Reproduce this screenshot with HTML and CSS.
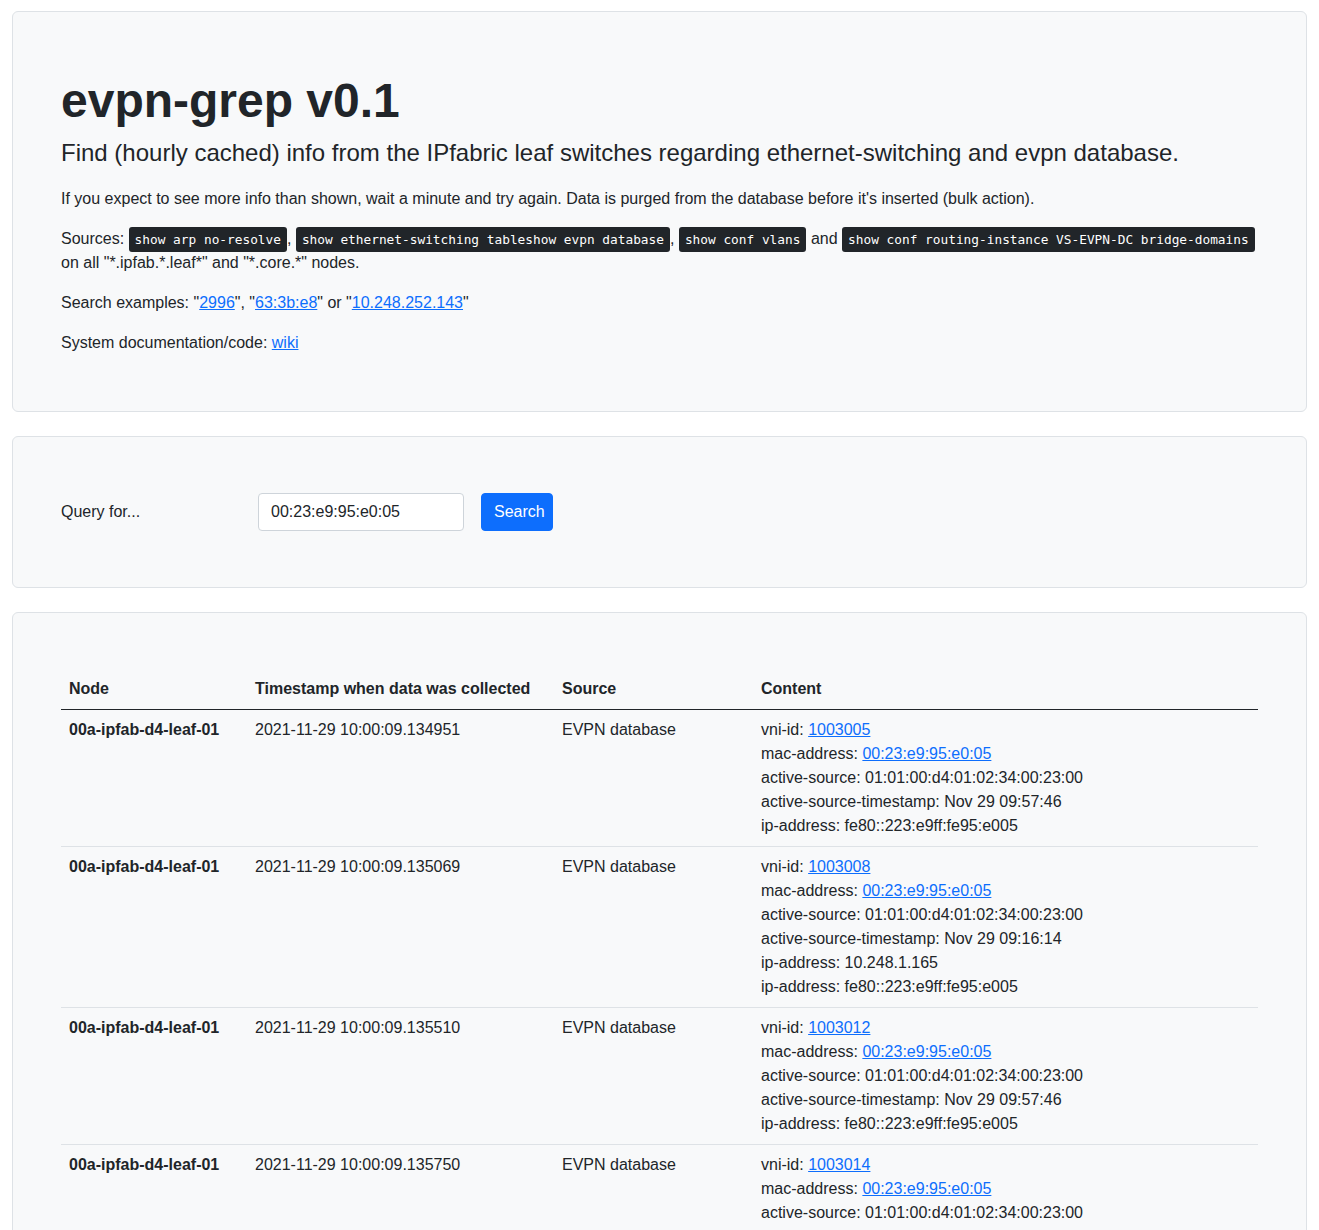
FILE: index.html
```html
<!DOCTYPE html>
<html lang="en">
<head>
<meta charset="utf-8">
<title>evpn-grep v0.1</title>
<link rel="stylesheet" href="styles.css">
</head>
<body>
<main class="page">
  <section class="panel">
    <h1 class="title">evpn-grep v0.1</h1>
    <p class="lead">Find (hourly cached) info from the IPfabric leaf switches regarding ethernet-switching and evpn database.</p>
    <p>If you expect to see more info than shown, wait a minute and try again. Data is purged from the database before it's inserted (bulk action).</p>
    <p>Sources: <kbd>show arp no-resolve</kbd>, <kbd>show ethernet-switching tableshow evpn database</kbd>, <kbd>show conf vlans</kbd> and <kbd>show conf routing-instance VS-EVPN-DC bridge-domains</kbd><br>on all "*.ipfab.*.leaf*" and "*.core.*" nodes.</p>
    <p>Search examples: "<a href="#">2996</a>", "<a href="#">63:3b:e8</a>" or "<a href="#">10.248.252.143</a>"</p>
    <p class="last">System documentation/code: <a href="#">wiki</a></p>
  </section>

  <section class="panel">
    <form class="query">
      <label class="query-label" for="q">Query for...</label>
      <input class="query-input" id="q" type="text" value="00:23:e9:95:e0:05">
      <button class="btn" type="button">Search</button>
    </form>
  </section>

  <section class="panel">
    <table class="results">
      <colgroup>
        <col class="c-node"><col class="c-ts"><col class="c-src"><col class="c-content">
      </colgroup>
      <thead>
        <tr><th>Node</th><th>Timestamp when data was collected</th><th>Source</th><th>Content</th></tr>
      </thead>
      <tbody>
        <tr>
          <td class="node">00a-ipfab-d4-leaf-01</td>
          <td>2021-11-29 10:00:09.134951</td>
          <td>EVPN database</td>
          <td>
            <div>vni-id: <a href="#">1003005</a></div>
            <div>mac-address: <a href="#">00:23:e9:95:e0:05</a></div>
            <div>active-source: 01:01:00:d4:01:02:34:00:23:00</div>
            <div>active-source-timestamp: Nov 29 09:57:46</div>
            <div>ip-address: fe80::223:e9ff:fe95:e005</div>
          </td>
        </tr>
        <tr>
          <td class="node">00a-ipfab-d4-leaf-01</td>
          <td>2021-11-29 10:00:09.135069</td>
          <td>EVPN database</td>
          <td>
            <div>vni-id: <a href="#">1003008</a></div>
            <div>mac-address: <a href="#">00:23:e9:95:e0:05</a></div>
            <div>active-source: 01:01:00:d4:01:02:34:00:23:00</div>
            <div>active-source-timestamp: Nov 29 09:16:14</div>
            <div>ip-address: 10.248.1.165</div>
            <div>ip-address: fe80::223:e9ff:fe95:e005</div>
          </td>
        </tr>
        <tr>
          <td class="node">00a-ipfab-d4-leaf-01</td>
          <td>2021-11-29 10:00:09.135510</td>
          <td>EVPN database</td>
          <td>
            <div>vni-id: <a href="#">1003012</a></div>
            <div>mac-address: <a href="#">00:23:e9:95:e0:05</a></div>
            <div>active-source: 01:01:00:d4:01:02:34:00:23:00</div>
            <div>active-source-timestamp: Nov 29 09:57:46</div>
            <div>ip-address: fe80::223:e9ff:fe95:e005</div>
          </td>
        </tr>
        <tr>
          <td class="node">00a-ipfab-d4-leaf-01</td>
          <td>2021-11-29 10:00:09.135750</td>
          <td>EVPN database</td>
          <td>
            <div>vni-id: <a href="#">1003014</a></div>
            <div>mac-address: <a href="#">00:23:e9:95:e0:05</a></div>
            <div>active-source: 01:01:00:d4:01:02:34:00:23:00</div>
            <div>active-source-timestamp: Nov 29 09:57:46</div>
            <div>ip-address: fe80::223:e9ff:fe95:e005</div>
          </td>
        </tr>
      </tbody>
    </table>
  </section>
</main>
</body>
</html>
```

FILE: styles.css
```css
* { box-sizing: border-box; }
html, body { margin: 0; padding: 0; background: #fff; }
body {
  font-family: "Liberation Sans", Arial, sans-serif;
  font-size: 16px;
  line-height: 1.5;
  color: #212529;
}

.page {
  padding: 11px 12px 12px;
  display: flex;
  flex-direction: column;
  gap: 24px;
}
.panel {
  background: #f8f9fa;
  border: 1px solid #dee2e6;
  border-radius: 6px;
  padding: 56px 48px;
}
.title {
  margin: 4px 0 5px;
  font-size: 48px;
  font-weight: 700;
  line-height: 1.2;
}
p { margin: 0 0 16px; }
p.last { margin-bottom: 0; }
.lead { font-size: 24px; line-height: 1.5; }
a { color: #0d6efd; text-decoration: underline; }
kbd {
  font-family: "DejaVu Sans Mono", "Liberation Mono", monospace;
  font-size: 12.8px;
  line-height: 1;
  background: #212529;
  color: #fff;
  padding: 5px 6px;
  border-radius: 3px;
}

.query {
  display: flex;
  align-items: center;
  margin: 0;
}
.query-label { width: 197px; }
.query-input {
  width: 206px;
  height: 38px;
  padding: 6px 12px;
  font: inherit;
  color: #212529;
  background: #fff;
  border: 1px solid #ced4da;
  border-radius: 4px;
  margin-right: 17px;
}
.btn {
  height: 38px;
  width: 72px;
  font: inherit;
  color: #fff;
  background: #0d6efd;
  border: 1px solid #0d6efd;
  border-radius: 4px;
  padding: 6px 12px;
}

.results {
  width: 100%;
  border-collapse: collapse;
  table-layout: fixed;
}
.c-node { width: 186px; }
.c-ts { width: 307px; }
.c-src { width: 199px; }
.results th {
  text-align: left;
  font-weight: 700;
  padding: 8px;
  border-bottom: 1px solid #212529;
}
.results td {
  padding: 8px;
  vertical-align: top;
  border-bottom: 1px solid #dee2e6;
}
.results td.node { font-weight: 700; }
```
